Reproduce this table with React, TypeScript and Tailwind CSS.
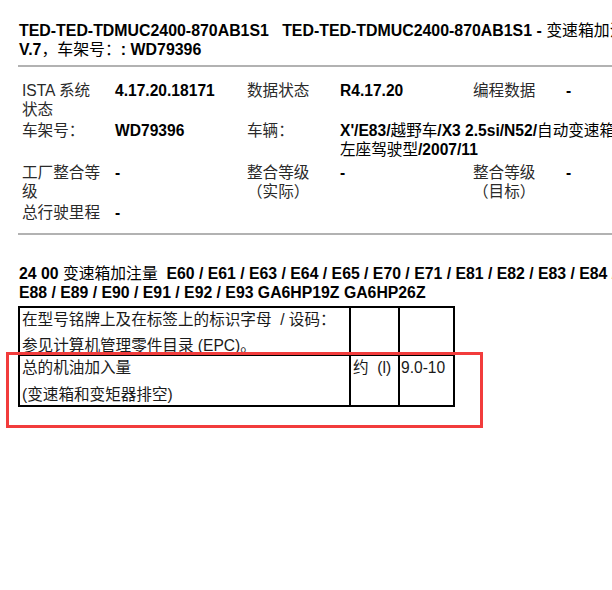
const font = "font-['Liberation_Sans','Noto_Sans_CJK_SC',sans-serif]";

type Cell = { text: React.ReactNode; bold?: boolean; span?: boolean };

const colWidths = ["w-[93px]", "w-[132px]", "w-[93px]", "w-[133px]", "w-[93px]", "w-[120px]"];

function InfoRow({ cells, className = "" }: { cells: Cell[]; className?: string }) {
    return (
        <div className={`flex items-start ${className}`}>
            {cells.map((c, i) => (
                <div
                    key={i}
                    className={`${c.span ? "flex-1 whitespace-nowrap" : colWidths[i]} shrink-0 ${
                        c.bold ? "font-bold text-black" : "pr-[13px] text-[#2a2a2a]"
                    }`}
                >
                    {c.text}
                </div>
            ))}
        </div>
    );
}

const cjk = (t: string) => <span className="font-normal">{t}</span>;

export default function App() {
    return (
        <div className={`relative w-[612px] h-[590px] overflow-hidden bg-white ${font} text-[15.6px] leading-[19px]`}>
            <div className="w-[1000px] pt-[21px] pl-[19px]">
                <div className="font-bold text-black whitespace-nowrap text-[15.9px]">
                    <div>
                        TED-TED-TDMUC2400-870AB1S1{"\u00a0\u00a0\u00a0"}TED-TED-TDMUC2400-870AB1S1 - {cjk("变速箱加注量")}
                    </div>
                    <div>
                        V.7{cjk("，车架号：")}: WD79396
                    </div>
                </div>

                <div className="mt-[6px] -ml-px h-[2px] bg-[#b2b2b2]" />

                <div className="mt-[14px] pl-[3px]">
                    <InfoRow
                        cells={[
                            { text: "ISTA 系统状态" },
                            { text: "4.17.20.18171", bold: true },
                            { text: "数据状态" },
                            { text: "R4.17.20", bold: true },
                            { text: "编程数据" },
                            { text: "-", bold: true },
                        ]}
                    />
                    <InfoRow
                        className="mt-[2px]"
                        cells={[
                            { text: "车架号：" },
                            { text: "WD79396", bold: true },
                            { text: "车辆：" },
                            {
                                text: (
                                    <>
                                        <div>
                                            X'/E83/{cjk("越野车")}/X3 2.5si/N52/{cjk("自动变速箱")}/EUR/
                                        </div>
                                        <div>
                                            {cjk("左座驾驶型")}/2007/11
                                        </div>
                                    </>
                                ),
                                bold: true,
                                span: true,
                            },
                        ]}
                    />
                    <InfoRow
                        className="mt-[4px]"
                        cells={[
                            { text: "工厂整合等级" },
                            { text: "-", bold: true },
                            { text: "整合等级（实际）" },
                            { text: "-", bold: true },
                            { text: "整合等级（目标）" },
                            { text: "-", bold: true },
                        ]}
                    />
                    <InfoRow className="mt-[2px]" cells={[{ text: "总行驶里程" }, { text: "-", bold: true }]} />
                </div>

                <div className="mt-[11px] -ml-px h-[2px] bg-[#b2b2b2]" />

                <div className="mt-[29px] font-bold text-black whitespace-nowrap text-[15.8px]">
                    <div>
                        24 00 {cjk("变速箱加注量")}{"\u00a0\u00a0"}E60 / E61 / E63 / E64 / E65 / E70 / E71 / E81 / E82 / E83 / E84 / E85 /
                    </div>
                    <div>E88 / E89 / E90 / E91 / E92 / E93 GA6HP19Z GA6HP26Z</div>
                </div>

                <div className="mt-[4px] -ml-px w-[437px] border-t-2 border-l-2 border-black text-[#1a1a1a] leading-[18px]">
                    <div className="grid grid-cols-[331px_49px_55px]">
                        <div className="border-r-2 border-b-2 border-black pl-[2px] pt-[3px] h-[48px] whitespace-nowrap">
                            <p>在型号铭牌上及在标签上的标识字母{"\u00a0\u00a0"}/ 设码：</p>
                            <p className="mt-[8px]">参见计算机管理零件目录 (EPC)。</p>
                        </div>
                        <div className="border-r-2 border-b-2 border-black" />
                        <div className="border-r-2 border-b-2 border-black" />

                        <div className="border-r-2 border-b-2 border-black pl-[2px] pt-[3px] h-[51px] whitespace-nowrap">
                            <p>总的机油加入量</p>
                            <p className="mt-[9px]">(变速箱和变矩器排空)</p>
                        </div>
                        <div className="border-r-2 border-b-2 border-black pl-[2px] pt-[3px] whitespace-nowrap">
                            约{"\u00a0\u00a0"}(l)
                        </div>
                        <div className="border-r-2 border-b-2 border-black pl-[1px] pt-[3px]">9.0-10</div>
                    </div>
                </div>
            </div>

            <div className="absolute left-[6px] top-[352px] w-[477px] h-[76px] border-[3px] border-[#f23c3c]" />
        </div>
    );
}
